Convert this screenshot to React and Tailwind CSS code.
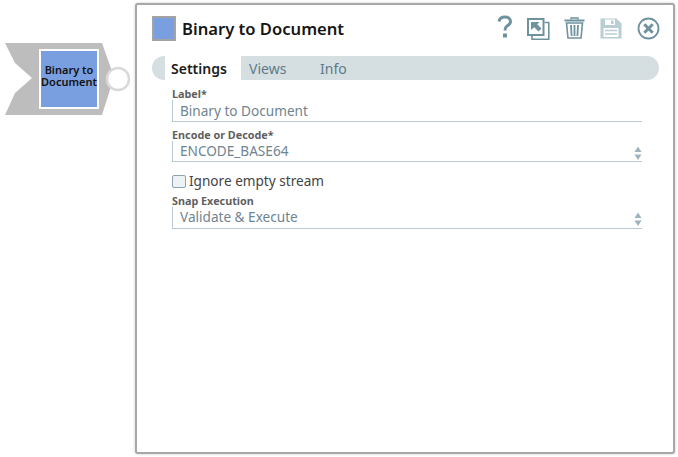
import React from "react";

const font = { fontFamily: '"Noto Sans", sans-serif' };

function Arrows() {
  return (
    <svg width="8" height="14" viewBox="0 0 8 14" className="absolute right-0 top-[5px]">
      <path d="M4 0.5 L7.5 6 H0.5 Z" fill="#9db4bd" />
      <path d="M0.5 8.5 H7.5 L4 14 Z" fill="#9db4bd" />
    </svg>
  );
}

function Field({ label, value, select, mt, h = "h-[21px]", pt }) {
  return (
    <div className={`flex flex-col ${mt}`}>
      <div className="text-[10.8px] leading-[13px] font-bold text-[#5f5f5f]">{label}</div>
      <div className={`relative ${h} ${pt} border-l border-b border-[#b9cbd1] pl-[7px] text-[13.6px] leading-[20px] text-[#6f8591]`}>
        {value}
        {select && <Arrows />}
      </div>
    </div>
  );
}

function Snap() {
  return (
    <div className="relative w-[135px] h-[457px] shrink-0">
      <svg width="135" height="130" viewBox="0 0 135 130" className="absolute left-0 top-0">
        <polygon points="5,43 102,43 114,77 102,115 5,115 15,93 32,78 15,63" fill="#bdbdbd" />
        <circle cx="118" cy="79" r="11" fill="#fff" stroke="#d9d9d9" strokeWidth="2.5" />
      </svg>
      <div className="absolute left-[39px] top-[49px] w-[60px] h-[60px] bg-[#7a9fe0] border-2 border-white flex items-center justify-center text-center text-[11px] leading-[12px] font-semibold text-[#111] pb-[6px]">
        Binary to<br />Document
      </div>
    </div>
  );
}

function Icons() {
  const c = "#6f929f";
  return (
    <div className="flex items-center h-[28px] ml-auto -mr-[1px]">
      <svg width="16" height="24" viewBox="0 0 16 24" className="-mt-[3px]">
        <path d="M2 6.5 C2.5 3 5.5 2 8 2 C11 2 13.5 3.6 13.5 6.5 C13.5 9 11.5 10 10 11 C8.6 12 8 13 8 15.5" fill="none" stroke={c} strokeWidth="3" />
        <rect x="6" y="18.5" width="4" height="4" fill={c} />
      </svg>
      <svg width="23" height="22" viewBox="0 0 23 22" className="ml-[14px] mt-[1px]">
        <rect x="1" y="1" width="15.5" height="16" fill="#fff" stroke={c} strokeWidth="2" />
        <path d="M17.5 4.5 H21.8 V21.2 H5 V18" fill="none" stroke={c} strokeWidth="1.6" />
        <path d="M4 4 H12.5 L10.3 6.2 L14.5 10.5 L11.5 13.5 L7.2 9.2 L4 12 Z" fill={c} />
      </svg>
      <svg width="21" height="22" viewBox="0 0 21 22" className="ml-[14px]">
        <path d="M7 2.5 V1 H14 V2.5" fill="none" stroke={c} strokeWidth="1.4" />
        <path d="M0.5 3.5 H20.5" stroke={c} strokeWidth="2" />
        <path d="M2.5 6 H18.5 L17 21 H4 Z" fill="none" stroke={c} strokeWidth="1.6" />
        <path d="M7 8 L7.6 19 M10.5 8 V19 M14 8 L13.4 19" stroke={c} strokeWidth="1.8" />
      </svg>
      <svg width="22" height="21" viewBox="0 0 22 21" className="ml-[15px] mt-[1px]">
        <path d="M0.5 0.5 H16.5 L21.5 5.5 V20.5 H0.5 Z" fill="#b9cdd4" />
        <rect x="5" y="1.5" width="10" height="5.5" fill="#fff" />
        <rect x="11" y="2.5" width="2.5" height="3.5" fill="#b9cdd4" />
        <rect x="3.5" y="10" width="15" height="9" fill="#fff" />
        <path d="M5 12.5 H17 M5 16 H17" stroke="#b9cdd4" strokeWidth="1.5" />
      </svg>
      <svg width="23" height="23" viewBox="0 0 23 23" className="ml-[15px]">
        <circle cx="11.5" cy="11.5" r="10" fill="none" stroke={c} strokeWidth="1.8" />
        <path d="M7.3 7.3 L15.7 15.7 M15.7 7.3 L7.3 15.7" stroke={c} strokeWidth="3" />
      </svg>
    </div>
  );
}

export default function App() {
  return (
    <div className="flex w-[678px] h-[457px] bg-white overflow-hidden" style={font}>
      <Snap />
      <div className="mt-[3px] w-[540px] h-[451px] shrink-0 bg-white rounded-[3px] border-2 border-[#a8a8a8] shadow-[0_0_3px_rgba(0,0,0,0.2)] pl-[15px] pr-[14px] pt-[9px]">
        <div className="flex items-center h-[28px]">
          <div className="w-[24px] h-[25px] bg-[#7a9fe0] border-2 border-[#a3a3a3]" />
          <div className="ml-[6px] text-[16.6px] font-semibold text-[#151515] leading-[28px] pt-[2px]">Binary to Document</div>
          <Icons />
        </div>
        <div className="mt-[14px] h-[24px] bg-[#d5dfe2] rounded-full flex pl-[13px] text-[14px] leading-[26px] text-[#5f7a87]">
          <div className="w-[76px] bg-white pl-[6px] font-semibold text-[#1c1c1c]">Settings</div>
          <div className="ml-[8px] w-[71px]">Views</div>
          <div>Info</div>
        </div>
        <div className="ml-[20px] mr-[17px] mt-[7px] flex flex-col">
          <Field label="Label*" value="Binary to Document" h="h-[22px]" pt="pt-[1px]" />
          <Field label="Encode or Decode*" value="ENCODE_BASE64" select mt="mt-[6px]" />
          <div className="flex items-center mt-[12px] h-[14px]">
            <div className="w-[14px] h-[13px] rounded-[2px] border border-[#8da2ab] bg-[#edf2f4]" />
            <div className="ml-[3px] text-[13.6px] text-[#444] leading-[14px]">Ignore empty stream</div>
          </div>
          <Field label="Snap Execution" value="Validate & Execute" select mt="mt-[6px]" h="h-[22px]" />
        </div>
      </div>
    </div>
  );
}
